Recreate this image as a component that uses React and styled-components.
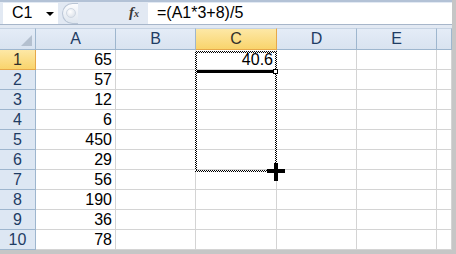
import React from "react";
import styled, { createGlobalStyle } from "styled-components";

const Global = createGlobalStyle`
  html, body { margin: 0; padding: 0; background: #ffffff; }
  body { font-family: "Liberation Sans", Arial, sans-serif; }
`;

const Frame = styled.div`
  width: 456px;
  height: 254px;
  background: #c6c6c6;
  position: relative;
  overflow: hidden;
`;

const Window = styled.div`
  width: 452px;
  height: 250px;
  background: #ffffff;
  display: flex;
  flex-direction: column;
  overflow: hidden;
  position: relative;
`;

const FormulaBar = styled.div`
  height: 24px;
  border-top: 2px solid #b3c2d6;
  border-bottom: 1px solid #a7b6ca;
  background: #e2e9f3;
  display: flex;
  align-items: center;
  padding-left: 3px;
`;

const NameBox = styled.div`
  width: 55px;
  height: 21px;
  background: #ffffff;
  display: flex;
  align-items: center;
  justify-content: space-between;
  box-sizing: border-box;
  padding: 0 4px 0 9px;
  font-size: 16px;
  color: #000;
`;

const Caret = styled.span`
  width: 0;
  height: 0;
  border-left: 4px solid transparent;
  border-right: 4px solid transparent;
  border-top: 4px solid #000;
  margin-top: 2px;
`;

const Grip = styled.div`
  margin-left: 4px;
  width: 16px;
  height: 21px;
  box-sizing: border-box;
  border: 1px solid #b9c5d5;
  border-right: none;
  border-radius: 11px 0 0 11px;
  background: linear-gradient(#fbfcfe, #dfe6ef);
  display: flex;
  align-items: center;
  padding-left: 3px;
`;

const GripDot = styled.span`
  width: 8px;
  height: 8px;
  border-radius: 50%;
  background: radial-gradient(circle at 40% 35%, #ffffff, #d5dce6);
  border: 1px solid #cfd7e2;
`;

const Fx = styled.div`
  width: 70px;
  text-align: right;
  padding-right: 9px;
  box-sizing: border-box;
  font-family: "Liberation Serif", "Times New Roman", serif;
  font-style: italic;
  font-weight: bold;
  font-size: 15px;
  line-height: 21px;
  color: #3a3a3a;
`;

const FxSub = styled.span`
  font-size: 10px;
  vertical-align: baseline;
`;

const FormulaInput = styled.div`
  flex: 1;
  height: 21px;
  background: #ffffff;
  display: flex;
  align-items: center;
  padding-left: 9px;
  font-size: 16px;
  color: #000;
`;

const Spacer = styled.div`
  height: 3px;
  background: #e2e9f3;
`;

const Grid = styled.div`
  display: grid;
  grid-template-columns: 36px 80px 80px 81px 80px 80px 1fr;
  grid-template-rows: 22px repeat(10, 20px);
  position: relative;
`;

const ColHead = styled.div`
  box-sizing: border-box;
  display: flex;
  align-items: center;
  justify-content: center;
  font-size: 16px;
  color: ${(p) => (p.$sel ? "#33302a" : "#1f3c64")};
  background: ${(p) =>
    p.$sel
      ? "linear-gradient(#fde8a6, #f9d46c)"
      : "linear-gradient(#e4ecf7, #d9e3f0)"};
  border-right: 1px solid ${(p) => (p.$sel ? "#e6a84a" : "#9eb6ce")};
  border-bottom: 1px solid ${(p) => (p.$sel ? "#e6a84a" : "#9eb6ce")};
  border-top: 1px solid #c6d3e3;
`;

const Corner = styled(ColHead)`
  position: relative;
  &::after {
    content: "";
    position: absolute;
    right: 3px;
    bottom: 3px;
    width: 0;
    height: 0;
    border-left: 11px solid transparent;
    border-bottom: 11px solid #b4c0cf;
  }
`;

const RowHead = styled.div`
  box-sizing: border-box;
  display: flex;
  align-items: center;
  justify-content: center;
  font-size: 16px;
  color: ${(p) => (p.$sel ? "#33302a" : "#1f3c64")};
  background: ${(p) =>
    p.$sel ? "linear-gradient(#fde8a6, #f9d46c)" : "#dde7f3"};
  border-right: 1px solid ${(p) => (p.$sel ? "#e6a84a" : "#9eb6ce")};
  border-bottom: 1px solid ${(p) => (p.$sel ? "#e6a84a" : "#9eb6ce")};
`;

const Cell = styled.div`
  box-sizing: border-box;
  display: flex;
  align-items: center;
  justify-content: flex-end;
  padding-right: 3px;
  font-size: 16px;
  color: #000;
  border-right: 1px solid #d4d4d4;
  border-bottom: 1px solid #d4d4d4;
`;

const Ants = styled.div`
  position: absolute;
  left: 195px;
  top: 51px;
  width: 82px;
  height: 121px;
  pointer-events: none;
`;

const AntStrip = styled.div`
  position: absolute;
  background: repeating-conic-gradient(#000 0 25%, #fff 0 50%) 0 0 / 2px 2px;
  ${(p) =>
    p.$side === "left"
      ? "left:0; top:0; bottom:0; width:2px;"
      : p.$side === "right"
      ? "right:0; top:0; bottom:0; width:2px;"
      : p.$side === "top"
      ? "left:0; right:0; top:0; height:2px;"
      : "left:0; right:0; bottom:0; height:2px;"}
`;

const ActiveLine = styled.div`
  position: absolute;
  left: 197px;
  top: 70px;
  width: 76px;
  height: 3px;
  background: #000;
`;

const Handle = styled.div`
  position: absolute;
  left: 273px;
  top: 69px;
  width: 5px;
  height: 5px;
  box-sizing: border-box;
  border: 1px solid #000;
  background: #fff;
`;

const PlusCursor = styled.svg`
  position: absolute;
  left: 267px;
  top: 163px;
`;

const values = [65, 57, 12, 6, 450, 29, 56, 190, 36, 78];
const cols = ["A", "B", "C", "D", "E", ""];

export default function App() {
  return (
    <>
      <Global />
      <Frame>
        <Window>
          <FormulaBar>
            <NameBox>
              <span>C1</span>
              <Caret />
            </NameBox>
            <Grip>
              <GripDot />
            </Grip>
            <Fx>
              f<FxSub>x</FxSub>
            </Fx>
            <FormulaInput>=(A1*3+8)/5</FormulaInput>
          </FormulaBar>
          <Spacer />
          <Grid>
            <Corner />
            {cols.map((c) => (
              <ColHead key={c || "f"} $sel={c === "C"}>
                {c}
              </ColHead>
            ))}
            {values.map((v, i) => (
              <React.Fragment key={i}>
                <RowHead $sel={i === 0}>{i + 1}</RowHead>
                <Cell>{v}</Cell>
                <Cell />
                <Cell>{i === 0 ? "40.6" : ""}</Cell>
                <Cell />
                <Cell />
                <Cell />
              </React.Fragment>
            ))}
          </Grid>
          <Ants>
            <AntStrip $side="left" />
            <AntStrip $side="right" />
            <AntStrip $side="top" />
            <AntStrip $side="bottom" />
          </Ants>
          <ActiveLine />
          <Handle />
          <PlusCursor width="18" height="18" viewBox="0 0 18 18">
            <rect x="7" y="0" width="4" height="18" fill="#000" />
            <rect x="0" y="6" width="18" height="4" fill="#000" />
          </PlusCursor>
        </Window>
      </Frame>
    </>
  );
}
